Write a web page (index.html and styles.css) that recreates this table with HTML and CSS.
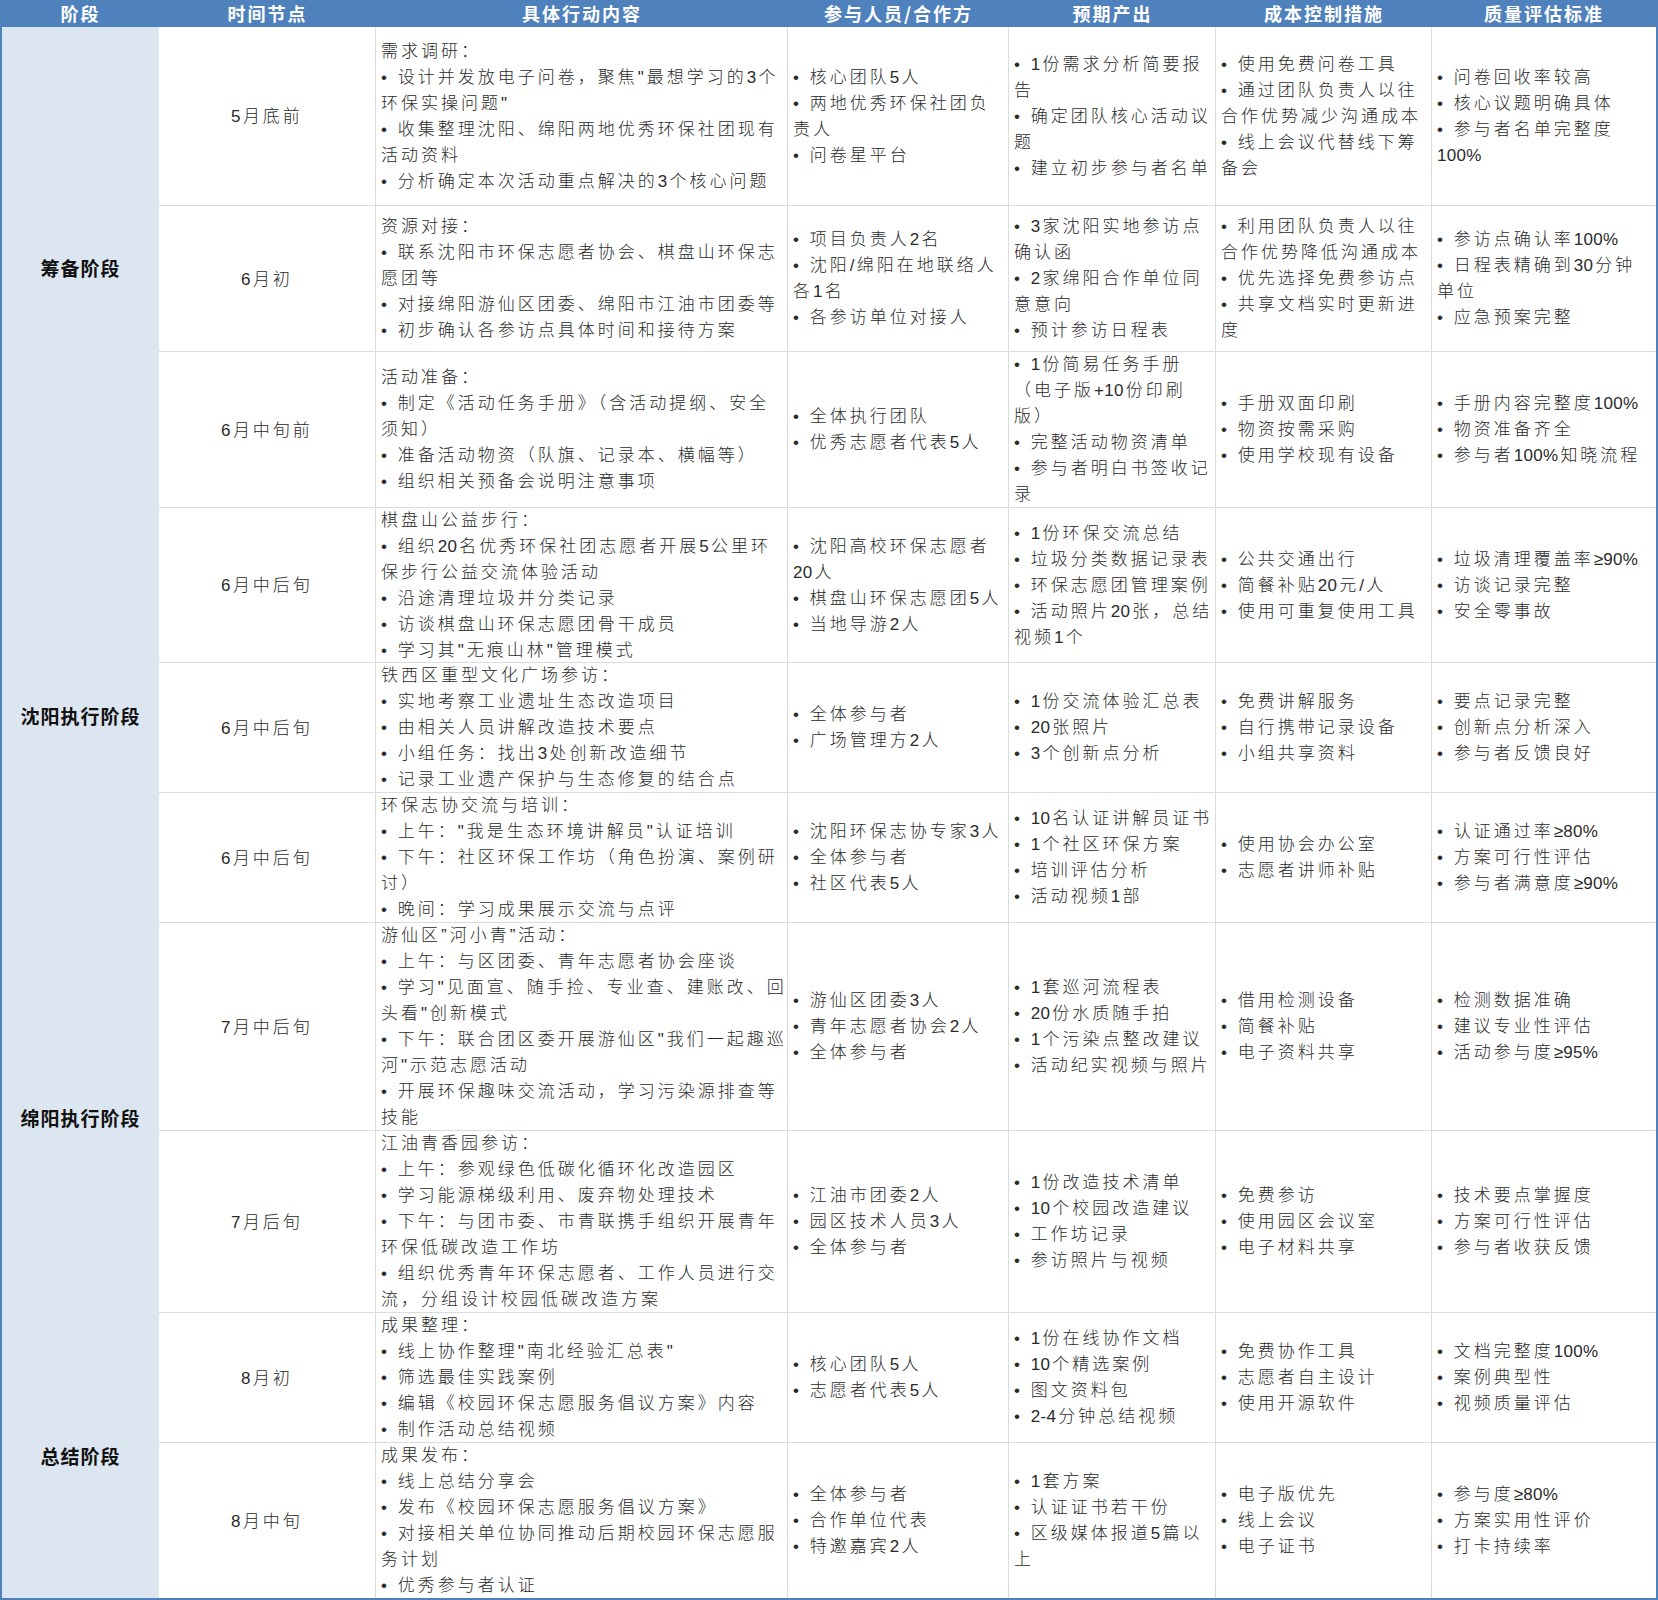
FILE: index.html
```html
<!DOCTYPE html>
<html lang="zh-CN">
<head>
<meta charset="utf-8">
<title>活动计划表</title>
<link rel="stylesheet" href="styles.css">
</head>
<body>
<div class="sheet">
  <div class="h">阶段</div>
  <div class="h">时间节点</div>
  <div class="h">具体行动内容</div>
  <div class="h">参与人员/合作方</div>
  <div class="h">预期产出</div>
  <div class="h">成本控制措施</div>
  <div class="h">质量评估标准</div>

  <!-- 筹备阶段 -->
  <div class="phase span3">筹备阶段</div>
  <div class="time"><span class="n">5</span>月底前</div>
  <div class="c"><div>需求调研：</div><div>• 设计并发放电子问卷，聚焦"最想学习的<span class="n">3</span>个</div><div>环保实操问题"</div><div>• 收集整理沈阳、绵阳两地优秀环保社团现有</div><div>活动资料</div><div>• 分析确定本次活动重点解决的<span class="n">3</span>个核心问题</div></div>
  <div class="c"><div>• 核心团队<span class="n">5</span>人</div><div>• 两地优秀环保社团负</div><div>责人</div><div>• 问卷星平台</div></div>
  <div class="c"><div>• <span class="n">1</span>份需求分析简要报</div><div>告</div><div>• 确定团队核心活动议</div><div>题</div><div>• 建立初步参与者名单</div></div>
  <div class="c"><div>• 使用免费问卷工具</div><div>• 通过团队负责人以往</div><div>合作优势减少沟通成本</div><div>• 线上会议代替线下筹</div><div>备会</div></div>
  <div class="c last"><div>• 问卷回收率较高</div><div>• 核心议题明确具体</div><div>• 参与者名单完整度</div><div><span class="n">100%</span></div></div>

  <div class="time"><span class="n">6</span>月初</div>
  <div class="c"><div>资源对接：</div><div>• 联系沈阳市环保志愿者协会、棋盘山环保志</div><div>愿团等</div><div>• 对接绵阳游仙区团委、绵阳市江油市团委等</div><div>• 初步确认各参访点具体时间和接待方案</div></div>
  <div class="c"><div>• 项目负责人<span class="n">2</span>名</div><div>• 沈阳<span class="n">/</span>绵阳在地联络人</div><div>各<span class="n">1</span>名</div><div>• 各参访单位对接人</div></div>
  <div class="c"><div>• <span class="n">3</span>家沈阳实地参访点</div><div>确认函</div><div>• <span class="n">2</span>家绵阳合作单位同</div><div>意意向</div><div>• 预计参访日程表</div></div>
  <div class="c"><div>• 利用团队负责人以往</div><div>合作优势降低沟通成本</div><div>• 优先选择免费参访点</div><div>• 共享文档实时更新进</div><div>度</div></div>
  <div class="c last"><div>• 参访点确认率<span class="n">100%</span></div><div>• 日程表精确到<span class="n">30</span>分钟</div><div>单位</div><div>• 应急预案完整</div></div>

  <div class="time"><span class="n">6</span>月中旬前</div>
  <div class="c"><div>活动准备：</div><div>• 制定《活动任务手册》（含活动提纲、安全</div><div>须知）</div><div>• 准备活动物资（队旗、记录本、横幅等）</div><div>• 组织相关预备会说明注意事项</div></div>
  <div class="c"><div>• 全体执行团队</div><div>• 优秀志愿者代表<span class="n">5</span>人</div></div>
  <div class="c"><div>• <span class="n">1</span>份简易任务手册</div><div>（电子版<span class="n">+10</span>份印刷</div><div>版）</div><div>• 完整活动物资清单</div><div>• 参与者明白书签收记</div><div>录</div></div>
  <div class="c"><div>• 手册双面印刷</div><div>• 物资按需采购</div><div>• 使用学校现有设备</div></div>
  <div class="c last"><div>• 手册内容完整度<span class="n">100%</span></div><div>• 物资准备齐全</div><div>• 参与者<span class="n">100%</span>知晓流程</div></div>

  <!-- 沈阳执行阶段 -->
  <div class="phase span3">沈阳执行阶段</div>
  <div class="time"><span class="n">6</span>月中后旬</div>
  <div class="c"><div>棋盘山公益步行：</div><div>• 组织<span class="n">20</span>名优秀环保社团志愿者开展<span class="n">5</span>公里环</div><div>保步行公益交流体验活动</div><div>• 沿途清理垃圾并分类记录</div><div>• 访谈棋盘山环保志愿团骨干成员</div><div>• 学习其"无痕山林"管理模式</div></div>
  <div class="c"><div>• 沈阳高校环保志愿者</div><div><span class="n">20</span>人</div><div>• 棋盘山环保志愿团<span class="n">5</span>人</div><div>• 当地导游<span class="n">2</span>人</div></div>
  <div class="c"><div>• <span class="n">1</span>份环保交流总结</div><div>• 垃圾分类数据记录表</div><div>• 环保志愿团管理案例</div><div>• 活动照片<span class="n">20</span>张，总结</div><div>视频<span class="n">1</span>个</div></div>
  <div class="c"><div>• 公共交通出行</div><div>• 简餐补贴<span class="n">20</span>元<span class="n">/</span>人</div><div>• 使用可重复使用工具</div></div>
  <div class="c last"><div>• 垃圾清理覆盖率<span class="n">≥90%</span></div><div>• 访谈记录完整</div><div>• 安全零事故</div></div>

  <div class="time"><span class="n">6</span>月中后旬</div>
  <div class="c"><div>铁西区重型文化广场参访：</div><div>• 实地考察工业遗址生态改造项目</div><div>• 由相关人员讲解改造技术要点</div><div>• 小组任务：找出<span class="n">3</span>处创新改造细节</div><div>• 记录工业遗产保护与生态修复的结合点</div></div>
  <div class="c"><div>• 全体参与者</div><div>• 广场管理方<span class="n">2</span>人</div></div>
  <div class="c"><div>• <span class="n">1</span>份交流体验汇总表</div><div>• <span class="n">20</span>张照片</div><div>• <span class="n">3</span>个创新点分析</div></div>
  <div class="c"><div>• 免费讲解服务</div><div>• 自行携带记录设备</div><div>• 小组共享资料</div></div>
  <div class="c last"><div>• 要点记录完整</div><div>• 创新点分析深入</div><div>• 参与者反馈良好</div></div>

  <div class="time"><span class="n">6</span>月中后旬</div>
  <div class="c"><div>环保志协交流与培训：</div><div>• 上午："我是生态环境讲解员"认证培训</div><div>• 下午：社区环保工作坊（角色扮演、案例研</div><div>讨）</div><div>• 晚间：学习成果展示交流与点评</div></div>
  <div class="c"><div>• 沈阳环保志协专家<span class="n">3</span>人</div><div>• 全体参与者</div><div>• 社区代表<span class="n">5</span>人</div></div>
  <div class="c"><div>• <span class="n">10</span>名认证讲解员证书</div><div>• <span class="n">1</span>个社区环保方案</div><div>• 培训评估分析</div><div>• 活动视频<span class="n">1</span>部</div></div>
  <div class="c"><div>• 使用协会办公室</div><div>• 志愿者讲师补贴</div></div>
  <div class="c last"><div>• 认证通过率<span class="n">≥80%</span></div><div>• 方案可行性评估</div><div>• 参与者满意度<span class="n">≥90%</span></div></div>

  <!-- 绵阳执行阶段 -->
  <div class="phase span2">绵阳执行阶段</div>
  <div class="time"><span class="n">7</span>月中后旬</div>
  <div class="c"><div>游仙区”河小青”活动：</div><div>• 上午：与区团委、青年志愿者协会座谈</div><div>• 学习"见面宣、随手捡、专业查、建账改、回</div><div>头看"创新模式</div><div>• 下午：联合团区委开展游仙区"我们一起趣巡</div><div>河"示范志愿活动</div><div>• 开展环保趣味交流活动，学习污染源排查等</div><div>技能</div></div>
  <div class="c"><div>• 游仙区团委<span class="n">3</span>人</div><div>• 青年志愿者协会<span class="n">2</span>人</div><div>• 全体参与者</div></div>
  <div class="c"><div>• <span class="n">1</span>套巡河流程表</div><div>• <span class="n">20</span>份水质随手拍</div><div>• <span class="n">1</span>个污染点整改建议</div><div>• 活动纪实视频与照片</div></div>
  <div class="c"><div>• 借用检测设备</div><div>• 简餐补贴</div><div>• 电子资料共享</div></div>
  <div class="c last"><div>• 检测数据准确</div><div>• 建议专业性评估</div><div>• 活动参与度<span class="n">≥95%</span></div></div>

  <div class="time"><span class="n">7</span>月后旬</div>
  <div class="c"><div>江油青香园参访：</div><div>• 上午：参观绿色低碳化循环化改造园区</div><div>• 学习能源梯级利用、废弃物处理技术</div><div>• 下午：与团市委、市青联携手组织开展青年</div><div>环保低碳改造工作坊</div><div>• 组织优秀青年环保志愿者、工作人员进行交</div><div>流，分组设计校园低碳改造方案</div></div>
  <div class="c"><div>• 江油市团委<span class="n">2</span>人</div><div>• 园区技术人员<span class="n">3</span>人</div><div>• 全体参与者</div></div>
  <div class="c"><div>• <span class="n">1</span>份改造技术清单</div><div>• <span class="n">10</span>个校园改造建议</div><div>• 工作坊记录</div><div>• 参访照片与视频</div></div>
  <div class="c"><div>• 免费参访</div><div>• 使用园区会议室</div><div>• 电子材料共享</div></div>
  <div class="c last"><div>• 技术要点掌握度</div><div>• 方案可行性评估</div><div>• 参与者收获反馈</div></div>

  <!-- 总结阶段 -->
  <div class="phase span2">总结阶段</div>
  <div class="time"><span class="n">8</span>月初</div>
  <div class="c"><div>成果整理：</div><div>• 线上协作整理"南北经验汇总表"</div><div>• 筛选最佳实践案例</div><div>• 编辑《校园环保志愿服务倡议方案》内容</div><div>• 制作活动总结视频</div></div>
  <div class="c"><div>• 核心团队<span class="n">5</span>人</div><div>• 志愿者代表<span class="n">5</span>人</div></div>
  <div class="c"><div>• <span class="n">1</span>份在线协作文档</div><div>• <span class="n">10</span>个精选案例</div><div>• 图文资料包</div><div>• <span class="n">2-4</span>分钟总结视频</div></div>
  <div class="c"><div>• 免费协作工具</div><div>• 志愿者自主设计</div><div>• 使用开源软件</div></div>
  <div class="c last"><div>• 文档完整度<span class="n">100%</span></div><div>• 案例典型性</div><div>• 视频质量评估</div></div>

  <div class="time bottom"><span class="n">8</span>月中旬</div>
  <div class="c bottom"><div>成果发布：</div><div>• 线上总结分享会</div><div>• 发布《校园环保志愿服务倡议方案》</div><div>• 对接相关单位协同推动后期校园环保志愿服</div><div>务计划</div><div>• 优秀参与者认证</div></div>
  <div class="c bottom"><div>• 全体参与者</div><div>• 合作单位代表</div><div>• 特邀嘉宾<span class="n">2</span>人</div></div>
  <div class="c bottom"><div>• <span class="n">1</span>套方案</div><div>• 认证证书若干份</div><div>• 区级媒体报道<span class="n">5</span>篇以</div><div>上</div></div>
  <div class="c bottom"><div>• 电子版优先</div><div>• 线上会议</div><div>• 电子证书</div></div>
  <div class="c last bottom"><div>• 参与度<span class="n">≥80%</span></div><div>• 方案实用性评价</div><div>• 打卡持续率</div></div>
</div>
</body>
</html>
```

FILE: styles.css
```css
html, body {
  margin: 0;
  padding: 0;
  background: #ffffff;
}

.sheet {
  box-sizing: border-box;
  width: 1658px;
  height: 1600px;
  display: grid;
  grid-template-columns: 157px 217px 412px 221px 207px 216px 224px;
  grid-template-rows: 27px 179px 146px 156px 155px 130px 130px 208px 182px 130px 155px;
  border-left: 2px solid #4f81bd;
  border-right: 2px solid #4f81bd;
  border-bottom: 2px solid #4f81bd;
  font-family: "Liberation Sans", "Noto Sans CJK SC", sans-serif;
  font-size: 17px;
  font-weight: 300;
  letter-spacing: 3px;
  line-height: 26px;
  color: #2a2a2a;
}

.n {
  letter-spacing: 0.3px;
  margin-right: 2px;
}

.h {
  background: #4f81bd;
  color: #ffffff;
  font-family: "Noto Sans CJK SC", sans-serif;
  font-weight: 700;
  font-size: 18px;
  letter-spacing: 2px;
  line-height: 27px;
  text-align: center;
  white-space: nowrap;
  overflow: hidden;
}

.phase {
  grid-column: 1;
  background: #dce6f1;
  display: flex;
  align-items: center;
  justify-content: center;
  font-family: "Noto Sans CJK SC", sans-serif;
  font-weight: 700;
  font-size: 19px;
  letter-spacing: 1px;
  color: #111111;
}

.span3 { grid-row: span 3; }
.span2 { grid-row: span 2; }

.time {
  grid-column: 2;
  display: flex;
  align-items: center;
  justify-content: center;
  border-right: 1px solid #dcdcdc;
  border-bottom: 1px solid #dcdcdc;
  padding-top: 2px;
  white-space: nowrap;
}

.c {
  display: flex;
  flex-direction: column;
  justify-content: center;
  padding: 1px 0 0 5px;
  border-right: 1px solid #dcdcdc;
  border-bottom: 1px solid #dcdcdc;
  white-space: nowrap;
  overflow: hidden;
}

.c.last { border-right: none; }
.bottom { border-bottom: none; }
```
